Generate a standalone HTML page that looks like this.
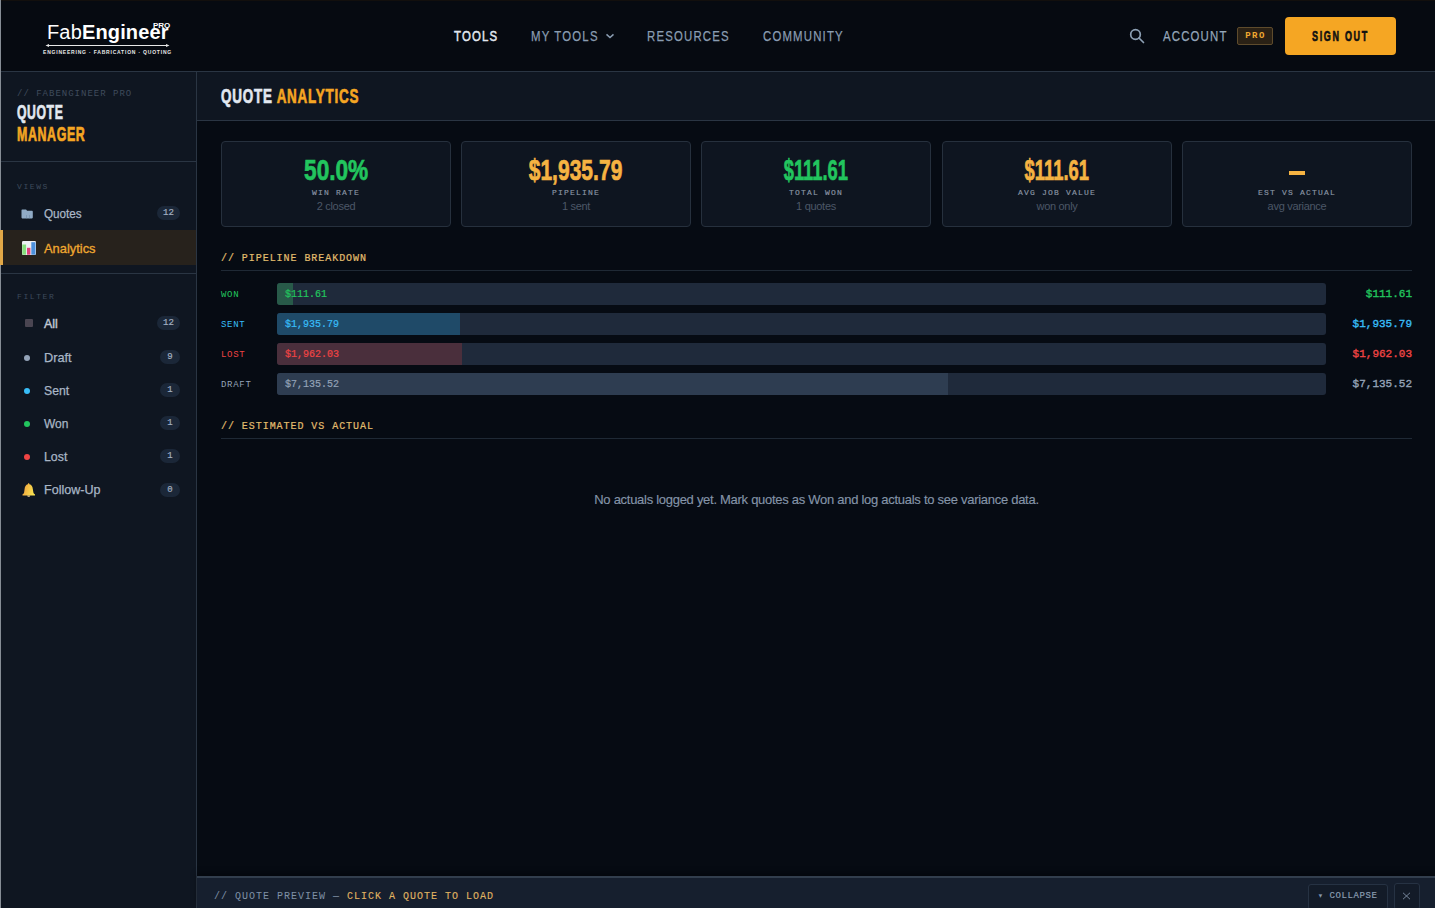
<!DOCTYPE html>
<html><head><meta charset="utf-8">
<style>
*{margin:0;padding:0;box-sizing:border-box}
html,body{width:1435px;height:908px;overflow:hidden;background:#060b13;font-family:"Liberation Sans",sans-serif}
.a{position:absolute;white-space:nowrap}
.sx{display:inline-block;transform-origin:0 0}
.bb{-webkit-text-stroke:0.7px currentColor}
.mono{font-family:"Liberation Mono",monospace}
#topline{left:0;top:0;width:1435px;height:1px;background:#120f0d}
#leftline{left:0;top:0;width:1px;height:908px;background:#868d95;z-index:5}
#header{left:0;top:0;width:1435px;height:72px;background:#060a11;border-bottom:1px solid #2a3543}
#side{left:0;top:72px;width:197px;height:836px;background:#0f1621;border-right:1px solid #2a3543}
#titlebar{left:197px;top:72px;width:1238px;height:49px;background:#0f1621;border-bottom:1px solid #2a3543}
.nav{top:23.5px;font-size:15.5px;line-height:24px;color:#8a9db2;letter-spacing:1.6px;-webkit-text-stroke:0.25px currentColor}
.card{top:141px;width:230px;height:86px;background:#0e1520;border:1px solid #26303d;border-radius:4px}
.big{font-weight:bold;font-size:29px;line-height:30px}
.lbl{font-family:"Liberation Mono",monospace;font-size:8px;letter-spacing:1.2px;color:#8a95a5;-webkit-text-stroke:0.15px #8a95a5}
.sub{font-size:11px;letter-spacing:-0.3px;color:#4c5767}
.sec{font-family:"Liberation Mono",monospace;font-size:10px;letter-spacing:0.95px;color:#e2bd6e;-webkit-text-stroke:0.2px currentColor}
.hr{height:1px;background:#1f2935;left:221px;width:1191px}
.rowlbl{font-family:"Liberation Mono",monospace;font-size:9px;letter-spacing:0.7px;left:221px}
.track{left:277px;width:1049px;height:22px;background:#1f2a3b;border-radius:3px;overflow:hidden}
.fill{position:absolute;left:0;top:0;height:22px}
.btxt{position:absolute;left:8px;top:1px;-webkit-text-stroke:0.2px currentColor;line-height:22px;font-family:"Liberation Mono",monospace;font-size:10px}
.val{font-family:"Liberation Mono",monospace;font-size:11px;-webkit-text-stroke:0.35px currentColor;right:23px;text-align:right}
.sitem{left:44px;font-size:13px;color:#a9b6c6;line-height:16px;-webkit-text-stroke:0.25px currentColor}
.badge{height:14px;border-radius:7px;background:#1b2738;color:#a3b0c2;-webkit-text-stroke:0.2px #a3b0c2;font-family:"Liberation Mono",monospace;font-size:9px;line-height:14px;text-align:center}
.dot{width:6px;height:6px;border-radius:3px}
</style></head><body>
<div class="a" id="header"></div>
<div class="a" id="topline"></div>

<!-- logo -->
<div class="a" style="left:47px;top:20px;font-size:20px;line-height:24px;color:#fff;letter-spacing:0.15px"><span>Fab</span><b>Engineer</b></div>
<div class="a" style="left:153px;top:22px;font-size:8px;line-height:8px;font-weight:bold;color:#fff">PRO</div>
<svg class="a" style="left:45px;top:42px" width="125" height="7" viewBox="0 0 125 7">
 <line x1="2" y1="3.5" x2="123" y2="3.5" stroke="#e8e8e8" stroke-width="1"/>
 <path d="M0.5 3.5 L4 2 L4 5 Z M124.5 3.5 L121 2 L121 5 Z" fill="#e8e8e8"/>
</svg>
<div class="a" style="left:43px;top:48.5px;font-size:5px;line-height:6px;font-weight:bold;color:#e8e8e8;letter-spacing:0.8px">ENGINEERING · FABRICATION · QUOTING</div>

<!-- nav -->
<div class="a nav" style="left:454px;color:#e2e8f0;-webkit-text-stroke:0.5px #e2e8f0"><span class="sx" style="transform:scaleX(0.735)">TOOLS</span></div>
<div class="a nav" style="left:531px"><span class="sx" style="transform:scaleX(0.735)">MY TOOLS</span></div>
<svg class="a" style="left:605px;top:32px" width="10" height="7" viewBox="0 0 10 7"><path d="M1.5 2.4 L5 5.6 L8.5 2.4" fill="none" stroke="#8a9db2" stroke-width="1.5"/></svg>
<div class="a nav" style="left:647px"><span class="sx" style="transform:scaleX(0.735)">RESOURCES</span></div>
<div class="a nav" style="left:763px"><span class="sx" style="transform:scaleX(0.735)">COMMUNITY</span></div>

<!-- right header -->
<svg class="a" style="left:1129px;top:28px" width="16" height="16" viewBox="0 0 16 16"><circle cx="6.5" cy="6.5" r="4.8" fill="none" stroke="#8da0b4" stroke-width="1.7"/><line x1="10" y1="10" x2="14.5" y2="14.5" stroke="#8da0b4" stroke-width="1.7" stroke-linecap="round"/></svg>
<div class="a nav" style="left:1163px;color:#94a6b9"><span class="sx" style="transform:scaleX(0.735)">ACCOUNT</span></div>
<div class="a" style="left:1237px;top:27px;width:36px;height:18px;background:#2a2115;border:1px solid #5e4b2c;border-radius:2px;color:#f0a830;font-family:'Liberation Mono',monospace;font-weight:bold;font-size:9px;line-height:16px;text-align:center;letter-spacing:1.5px;padding-left:1px">PRO</div>
<div class="a" style="left:1285px;top:17px;width:111px;height:38px;background:#f5a623;border-radius:4px"></div>
<div class="a" style="left:1312px;top:25px;font-size:15px;line-height:22px;font-weight:bold;color:#111;letter-spacing:2.8px"><span class="sx bb" style="transform:scaleX(0.6)">SIGN OUT</span></div>

<!-- sidebar -->
<div class="a" id="side"></div>
<div class="a" style="left:0;top:161px;width:196px;height:1px;background:#2a3543"></div>
<div class="a mono" style="left:17px;top:89px;font-size:9px;line-height:10px;letter-spacing:1px;color:#3f4b5c">// FABENGINEER PRO</div>
<div class="a" style="left:17px;top:101px;font-size:20px;line-height:22px;font-weight:bold;color:#e2e8f0;letter-spacing:1px"><span class="sx bb" style="transform:scaleX(0.61)">QUOTE</span></div>
<div class="a" style="left:17px;top:123px;font-size:20px;line-height:22px;font-weight:bold;color:#f5a623;letter-spacing:1px"><span class="sx bb" style="transform:scaleX(0.62)">MANAGER</span></div>

<div class="a mono" style="left:17px;top:182px;font-size:8px;line-height:10px;letter-spacing:1.6px;color:#3d4a5b">VIEWS</div>
<!-- quotes icon -->
<svg class="a" style="left:21px;top:209px" width="12" height="10" viewBox="0 0 12 10"><path d="M0.5 1.2 Q0.5 0.6 1.2 0.6 L5 0.6 Q5.6 1.2 6 1.8 L11 1.8 Q11.8 1.8 11.8 2.8 L11.8 8.6 Q11.8 9.4 11 9.4 L1.2 9.4 Q0.5 9.4 0.5 8.6Z" fill="#90abc6"/><path d="M5.5 6 v3.4 M8.5 6 v3.4" stroke="#6f8aa6" stroke-width="0.6"/></svg>
<div class="a sitem" style="top:206px"><span class="sx" style="transform:scaleX(0.9)">Quotes</span></div>
<div class="a badge" style="left:157px;top:206px;width:23px">12</div>

<div class="a" style="left:0;top:230px;width:196px;height:35px;background:#27221c"></div>
<div class="a" style="left:0;top:230px;width:3px;height:35px;background:#e2a847;z-index:6"></div>
<svg class="a" style="left:22px;top:241px" width="14" height="14" viewBox="0 0 14 14"><rect x="0" y="0" width="14" height="14" rx="1.2" fill="#eef0f4"/><rect x="0.3" y="3.5" width="3.8" height="10.2" fill="#86df7c"/><rect x="5" y="6.8" width="3.4" height="6.9" fill="#e0427e"/><rect x="9.3" y="1.2" width="4.2" height="12.5" fill="#4c90dc"/></svg>
<div class="a sitem" style="top:241px;color:#f0a830;-webkit-text-stroke:0.3px #f0a830"><span class="sx" style="transform:scaleX(0.99)">Analytics</span></div>
<div class="a" style="left:0;top:273px;width:196px;height:1px;background:#2a3543"></div>

<div class="a mono" style="left:17px;top:292px;font-size:8px;line-height:10px;letter-spacing:1.6px;color:#3d4a5b">FILTER</div>
<div class="a" style="left:25px;top:319px;width:8px;height:8px;background:#4a4551;border-radius:1px"></div>
<div class="a sitem" style="top:316px;color:#c0c9d4;-webkit-text-stroke:0.4px #c0c9d4"><span class="sx" style="transform:scaleX(0.96)">All</span></div>
<div class="a badge" style="left:157px;top:316px;width:23px">12</div>

<div class="a dot" style="left:24px;top:355px;background:#94a3b8"></div>
<div class="a sitem" style="top:350px"><span class="sx" style="transform:scaleX(0.98)">Draft</span></div>
<div class="a badge" style="left:160px;top:350px;width:20px">9</div>

<div class="a dot" style="left:24px;top:388px;background:#38bdf8"></div>
<div class="a sitem" style="top:383px"><span class="sx" style="transform:scaleX(0.94)">Sent</span></div>
<div class="a badge" style="left:160px;top:383px;width:20px">1</div>

<div class="a dot" style="left:24px;top:421px;background:#22c55e"></div>
<div class="a sitem" style="top:416px"><span class="sx" style="transform:scaleX(0.92)">Won</span></div>
<div class="a badge" style="left:160px;top:416px;width:20px">1</div>

<div class="a dot" style="left:24px;top:454px;background:#ef4444"></div>
<div class="a sitem" style="top:449px"><span class="sx" style="transform:scaleX(0.95)">Lost</span></div>
<div class="a badge" style="left:160px;top:449px;width:20px">1</div>

<svg class="a" style="left:22px;top:483px" width="14" height="14" viewBox="0 0 14 14"><defs><linearGradient id="bg1" x1="0" y1="0" x2="1" y2="0.3"><stop offset="0" stop-color="#f09a3a"/><stop offset="1" stop-color="#f8e050"/></linearGradient></defs><path d="M6.6 0.3 C7.2 0.3 7.4 0.8 7.4 1.3 C9.6 1.8 10.6 3.6 10.8 6 L11.4 9.6 C11.6 10.6 12.4 11 13 11.4 L13 12.4 L0.5 12.4 L0.5 11.4 C1.1 11 1.9 10.6 2.1 9.6 L2.6 6 C2.8 3.6 3.8 1.8 5.9 1.3 C5.9 0.8 6.1 0.3 6.6 0.3Z" fill="url(#bg1)"/><path d="M5.2 12.4 h3 c0 0.9 -0.6 1.4 -1.5 1.4 c-0.9 0 -1.5 -0.5 -1.5 -1.4z" fill="#f6d890"/></svg>
<div class="a sitem" style="top:482px"><span class="sx" style="transform:scaleX(0.965)">Follow-Up</span></div>
<div class="a badge" style="left:160px;top:483px;width:20px">0</div>

<!-- title bar -->
<div class="a" id="titlebar"></div>
<div class="a" style="left:221px;top:84px;font-size:21px;line-height:24px;font-weight:bold;color:#e2e8f0;letter-spacing:1.2px"><span class="sx bb" style="transform:scaleX(0.64)">QUOTE <span style="color:#f5a623">ANALYTICS</span></span></div>

<!-- cards -->
<div class="a card" style="left:221px"></div>
<div class="a card" style="left:461px"></div>
<div class="a card" style="left:701px"></div>
<div class="a card" style="left:942px"></div>
<div class="a card" style="left:1182px"></div>

<div class="a" style="left:221px;top:155px;width:230px;text-align:center"><div class="big" style="color:#22c55e;height:30px"><span class="sx bb" style="transform:scaleX(0.78);transform-origin:50% 0">50.0%</span></div><div class="lbl" style="line-height:10px;margin-top:3px">WIN RATE</div><div class="sub" style="line-height:14px;margin-top:1px">2 closed</div></div>
<div class="a" style="left:461px;top:155px;width:230px;text-align:center"><div class="big" style="color:#f5b342;height:30px"><span class="sx bb" style="transform:scaleX(0.726);transform-origin:50% 0">$1,935.79</span></div><div class="lbl" style="line-height:10px;margin-top:3px">PIPELINE</div><div class="sub" style="line-height:14px;margin-top:1px">1 sent</div></div>
<div class="a" style="left:701px;top:155px;width:230px;text-align:center"><div class="big" style="color:#22c55e;height:30px"><span class="sx bb" style="transform:scaleX(0.632);transform-origin:50% 0">$111.61</span></div><div class="lbl" style="line-height:10px;margin-top:3px">TOTAL WON</div><div class="sub" style="line-height:14px;margin-top:1px">1 quotes</div></div>
<div class="a" style="left:942px;top:155px;width:230px;text-align:center"><div class="big" style="color:#f5b342;height:30px"><span class="sx bb" style="transform:scaleX(0.634);transform-origin:50% 0">$111.61</span></div><div class="lbl" style="line-height:10px;margin-top:3px">AVG JOB VALUE</div><div class="sub" style="line-height:14px;margin-top:1px">won only</div></div>
<div class="a" style="left:1289px;top:171px;width:16px;height:4px;background:#f5b342"></div>
<div class="a" style="left:1182px;top:155px;width:230px;text-align:center"><div style="height:30px"></div><div class="lbl" style="line-height:10px;margin-top:3px">EST VS ACTUAL</div><div class="sub" style="line-height:14px;margin-top:1px">avg variance</div></div>

<!-- sections -->
<div class="a sec" style="left:221px;top:253px;line-height:12px">// PIPELINE BREAKDOWN</div>
<div class="a hr" style="top:270px"></div>

<div class="a rowlbl" style="top:290px;line-height:10px;color:#22c55e">WON</div>
<div class="a track" style="top:283px"><div class="fill" style="width:16px;background:#285a49"></div><div class="btxt" style="color:#22c55e">$111.61</div></div>
<div class="a val" style="top:288px;line-height:12px;color:#22c55e">$111.61</div>

<div class="a rowlbl" style="top:320px;line-height:10px;color:#38bdf8">SENT</div>
<div class="a track" style="top:313px"><div class="fill" style="width:183px;background:#1f4a68"></div><div class="btxt" style="color:#38bdf8">$1,935.79</div></div>
<div class="a val" style="top:318px;line-height:12px;color:#38bdf8">$1,935.79</div>

<div class="a rowlbl" style="top:350px;line-height:10px;color:#ef4444">LOST</div>
<div class="a track" style="top:343px"><div class="fill" style="width:185px;background:#4a2f3c"></div><div class="btxt" style="color:#ef4444">$1,962.03</div></div>
<div class="a val" style="top:348px;line-height:12px;color:#ef4444">$1,962.03</div>

<div class="a rowlbl" style="top:380px;line-height:10px;color:#94a3b8">DRAFT</div>
<div class="a track" style="top:373px"><div class="fill" style="width:671px;background:#2e3d51"></div><div class="btxt" style="color:#94a3b8">$7,135.52</div></div>
<div class="a val" style="top:378px;line-height:12px;color:#94a3b8">$7,135.52</div>

<div class="a sec" style="left:221px;top:421px;line-height:12px">// ESTIMATED VS ACTUAL</div>
<div class="a hr" style="top:438px"></div>

<div class="a" style="left:221px;top:491px;width:1191px;text-align:center;font-size:13px;line-height:18px;letter-spacing:-0.28px;color:#8494a8;-webkit-text-stroke:0.15px #8494a8">No actuals logged yet. Mark quotes as Won and log actuals to see variance data.</div>

<!-- bottom bar -->
<div class="a" style="left:197px;top:876px;width:1238px;height:32px;background:#161f2e;border-top:2px solid #323e4d;box-shadow:0 -3px 6px rgba(0,0,0,0.35)"></div>
<div class="a mono" style="left:214px;top:890px;font-size:10px;line-height:14px;letter-spacing:1px;color:#7f91a6">// QUOTE PREVIEW — <span style="color:#e0b462;-webkit-text-stroke:0.1px #e0b462">CLICK A QUOTE TO LOAD</span></div>
<div class="a" style="left:1308px;top:884px;width:80px;height:26px;border:1px solid #263243;border-radius:3px;background:#131b28"></div>
<div class="a mono" style="left:1318px;top:889px;font-size:9px;line-height:14px;letter-spacing:0.6px;color:#8a9bb0;-webkit-text-stroke:0.2px #8a9bb0"><span style="font-size:8px">▾</span> COLLAPSE</div>
<div class="a" style="left:1394px;top:883px;width:26px;height:27px;border:1px solid #263243;border-radius:3px;background:#131b28"></div>
<svg class="a" style="left:1402px;top:892px" width="9" height="8" viewBox="0 0 9 8"><path d="M1 0.8 L8 7.2 M8 0.8 L1 7.2" stroke="#8090a5" stroke-width="0.9"/></svg>

<div class="a" id="leftline"></div>
</body></html>
